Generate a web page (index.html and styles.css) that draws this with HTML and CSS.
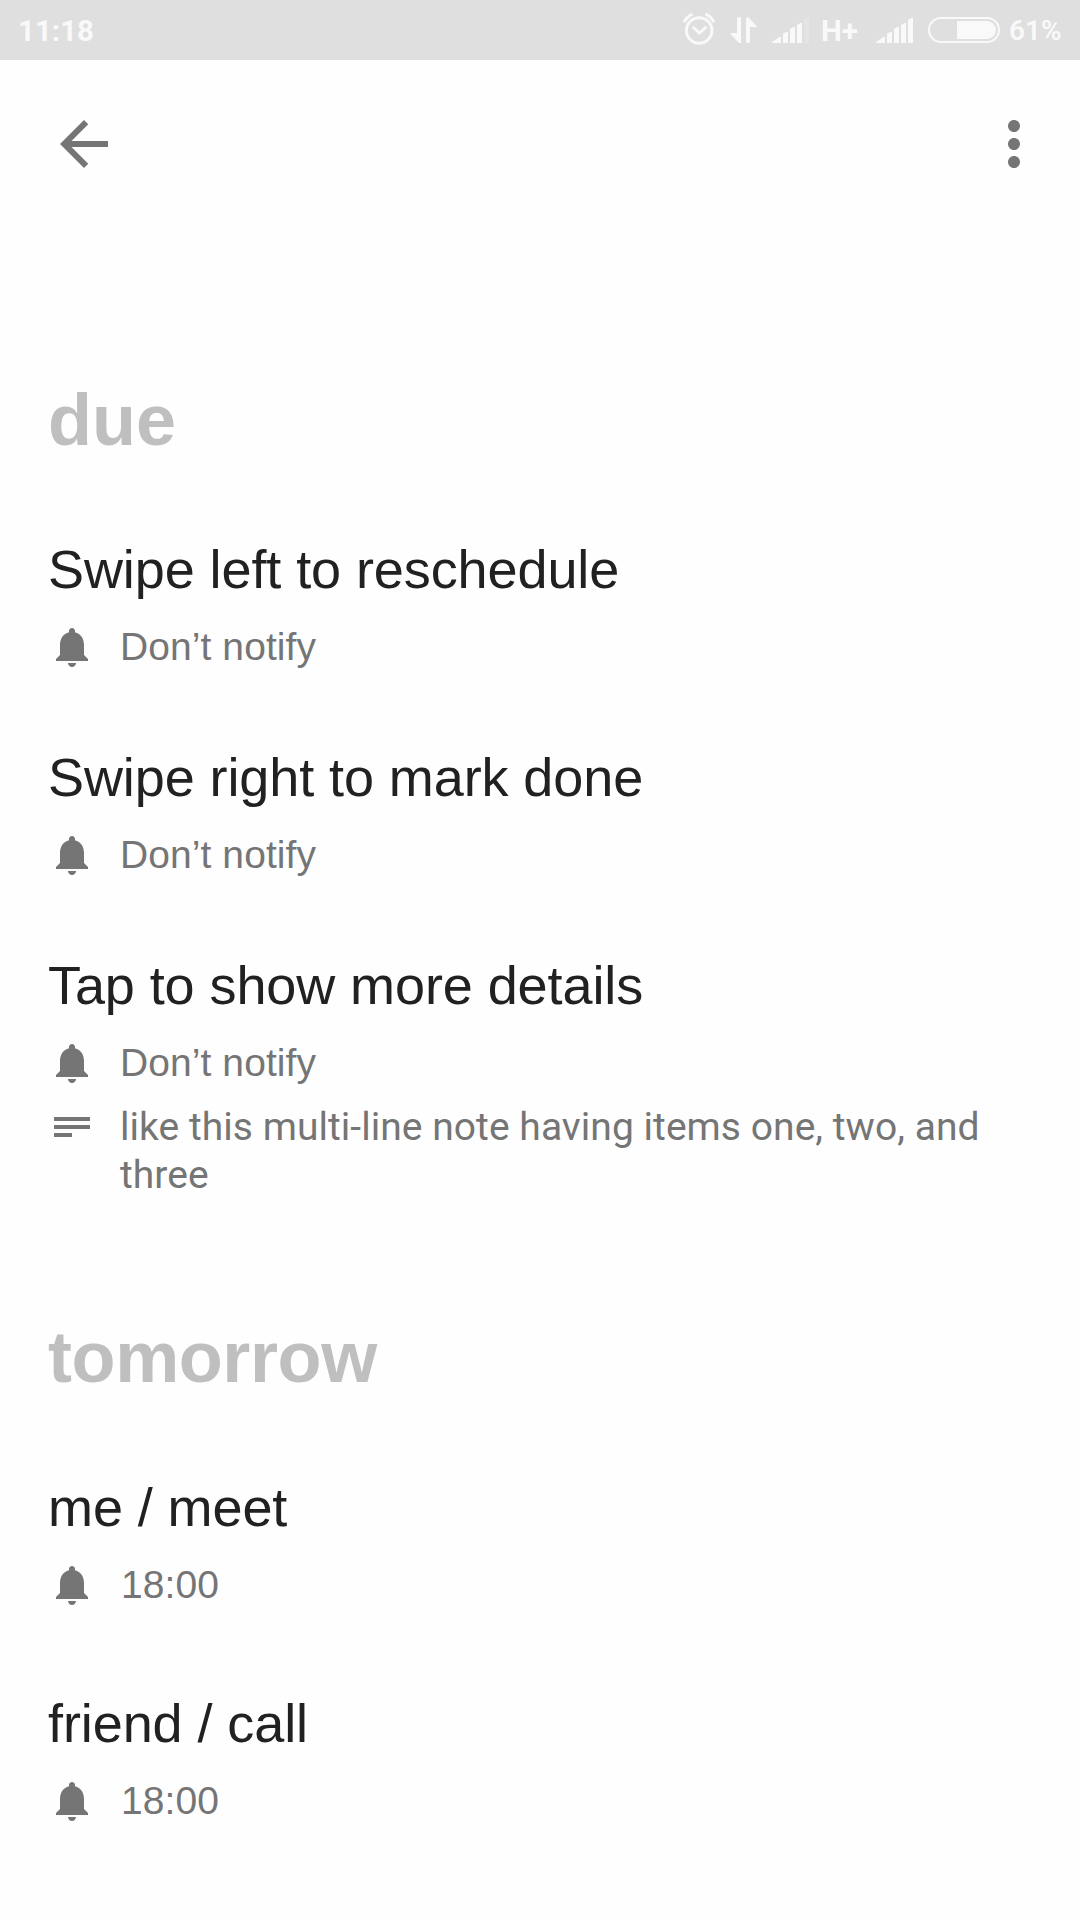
FILE: index.html
```html
<!DOCTYPE html>
<html lang="en">
<head>
<meta charset="utf-8">
<title>Reminders</title>
<link rel="stylesheet" href="styles.css">
</head>
<body>
<svg class="defs" width="0" height="0" aria-hidden="true">
  <symbol id="bell" viewBox="0 0 24 24"><path d="M12 22c1.1 0 2-.9 2-2h-4c0 1.1.89 2 2 2zm6-6v-5c0-3.07-1.64-5.64-4.5-6.32V4c0-.83-.67-1.5-1.5-1.5s-1.5.67-1.5 1.5v.68C7.63 5.36 6 7.92 6 11v5l-2 2v1h16v-1l-2-2z"/></symbol>
  <symbol id="note" viewBox="0 0 24 24"><path d="M3 7h18v2H3zM3 11h18v2H3zM3 15h9v2H3z"/></symbol>
</svg>

<header class="status">
  <span class="clock">11:18</span>
  <svg class="alarm" width="34" height="34" viewBox="0 0 34 34" fill="none">
    <circle cx="17.2" cy="18.5" r="12.8" stroke="currentColor" stroke-width="3"/>
    <path d="M11.5 15.5l6 5.5 6-5.5" stroke="currentColor" stroke-width="3" stroke-linecap="round"/>
    <path d="M2 10.2q3-5.4 8.500-8M23.500 2.200q5.800 2.600 8.500 8" stroke="currentColor" stroke-width="3"/>
  </svg>
  <svg class="data" width="27" height="26" viewBox="0 0 27 26">
    <path d="M7 1.800a1.800 1.800 0 0 1 4 0V26H9L0 16.500V16h7zM16 1.800Q16 0 18 0l9 9.500v.5h-7v14.200a1.800 1.800 0 0 1-4 0z"/>
  </svg>
  <svg class="signal" width="37" height="25" viewBox="0 0 37 25">
    <path d="M0 25v-1l7.500-5H9v6zM11 25V15.500L14.500 14H16v11zM18 25V11l3.500-2H23v16zM25 25V7l3.500-2H30v20z"/>
    <path opacity=".2" d="M32 25V2l3.500-2H37v25z"/>
  </svg>
  <span class="network">H+</span>
  <svg class="signal second" width="37" height="25" viewBox="0 0 37 25">
    <path d="M0 25v-1l7.500-5H9v6zM11 25V15.500L14.500 14H16v11zM18 25V11l3.500-2H23v16zM25 25V7l3.500-2H30v20zM32 25V2l3.500-2H37v25z"/>
  </svg>
  <svg class="battery" width="72" height="26" viewBox="0 0 72 26">
    <rect x="1" y="1" width="70" height="24" rx="12" fill="none" stroke="currentColor" stroke-width="2"/>
    <path d="M29 4h30a9 9 0 0 1 0 18H29z"/>
  </svg>
  <span class="percent">61%</span>
</header>

<nav class="toolbar">
  <svg width="72" height="72" viewBox="0 0 24 24"><path d="M20 11H7.830l5.590-5.590L12 4l-8 8 8 8 1.410-1.410L7.830 13H20v-2z"/></svg>
  <svg width="72" height="72" viewBox="0 0 24 24"><path d="M12 8c1.100 0 2-.9 2-2s-.9-2-2-2-2 .9-2 2 .9 2 2 2zm0 2c-1.100 0-2 .9-2 2s.9 2 2 2 2-.9 2-2-.9-2-2-2zm0 6c-1.100 0-2 .9-2 2s.9 2 2 2 2-.9 2-2-.9-2-2-2z"/></svg>
</nav>

<main class="agenda">
  <section class="group due">
    <h2>due</h2>
    <article>
      <h3>Swipe left to reschedule</h3>
      <div class="row"><svg><use href="#bell"/></svg><p>Don’t notify</p></div>
    </article>
    <article>
      <h3>Swipe right to mark done</h3>
      <div class="row"><svg><use href="#bell"/></svg><p>Don’t notify</p></div>
    </article>
    <article>
      <h3>Tap to show more details</h3>
      <div class="row"><svg><use href="#bell"/></svg><p>Don’t notify</p></div>
      <div class="row detail"><svg><use href="#note"/></svg><p>like this multi-line note having items one, two, and three</p></div>
    </article>
  </section>
  <section class="group tomorrow">
    <h2>tomorrow</h2>
    <article>
      <h3>me / meet</h3>
      <div class="row"><svg><use href="#bell"/></svg><p>18:00</p></div>
    </article>
    <article>
      <h3>friend / call</h3>
      <div class="row"><svg><use href="#bell"/></svg><p>18:00</p></div>
    </article>
  </section>
</main>
</body>
</html>
```
FILE: styles.css
```css
* { box-sizing: border-box; margin: 0; padding: 0; }

body {
  width: 1080px;
  height: 1920px;
  overflow: hidden;
  background: #fefefe;
  font-family: "Liberation Sans", Arial, sans-serif;
}

svg { display: block; flex: none; fill: currentColor; }
svg[fill="none"] { fill: none; }
.defs { position: absolute; }

.status {
  display: flex;
  align-items: center;
  height: 60px;
  padding: 0 18px;
  background: #dfdfdf;
  color: #f9f9f9;
  font: 700 29.5px/60px Roboto, sans-serif;
}
.clock { width: 664px; padding-top: 1px; }
.alarm { margin-top: -2px; }
.data { margin-left: 14px; }
.signal { margin: 1px 0 0 15px; }
.network { width: 52px; margin-left: 12px; padding-top: 1px; }
.signal.second { margin-left: 3px; }
.battery { margin-left: 15px; }
.percent { margin-left: 9px; padding-top: 1px; font-weight: 600; font-size: 28px; }

.toolbar {
  display: flex;
  justify-content: space-between;
  padding: 48px 30px 0 48px;
  color: #757575;
}

.agenda {
  display: flex;
  flex-direction: column;
  gap: 116px;
  padding: 198px 48px 0;
}

.group h2 {
  margin-bottom: 75px;
  color: #bfbfbf;
  font-size: 72px;
  line-height: 84px;
}
.tomorrow h2 { margin-bottom: 76px; letter-spacing: -.4px; }
.group h3 {
  margin-bottom: 22px;
  color: #212121;
  font-weight: 400;
  font-size: 54px;
  line-height: 64px;
  letter-spacing: -.09px;
}
article + article { margin-top: 82px; }
.due article + article { margin-top: 74px; }

.row {
  display: flex;
  gap: 24px;
  color: #757575;
  font-size: 39px;
  line-height: 48px;
  letter-spacing: .08px;
}
.row svg { width: 48px; height: 48px; }
.tomorrow .row { gap: 25px; }
.detail { margin-top: 16px; font-family: Roboto, sans-serif; letter-spacing: .045px; }
```
